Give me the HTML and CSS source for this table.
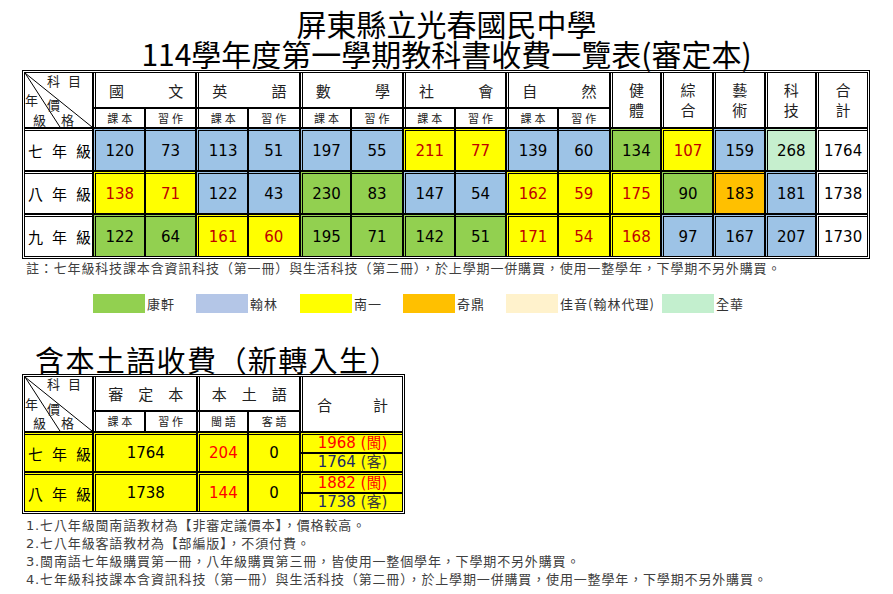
FILE: index.html
```html
<!DOCTYPE html>
<html lang="zh-Hant">
<head>
<meta charset="utf-8">
<title>屏東縣立光春國民中學 教科書收費一覽表</title>
<link rel="stylesheet" href="styles.css">
</head>
<body>
<div class="page">
  <h1 class="title"><span>屏東縣立光春國民中學</span><span>114學年度第一學期教科書收費一覽表(審定本)</span></h1>

  <table class="tbl main">
    <colgroup><col class="c-head"><col span="15"></colgroup>
    <thead>
      <tr class="h1">
        <td rowspan="2" class="diag">
          <div class="diag-box">
            <svg class="diag-lines" viewBox="0 0 69 56" preserveAspectRatio="none"><line x1="0" y1="0" x2="69" y2="56"/><line x1="0" y1="0" x2="36" y2="56"/></svg>
            <span class="dk d-ke">科</span><span class="dk d-mu">目</span><span class="dk d-nian">年</span><span class="dk d-jia">價</span><span class="dk d-ji">級</span><span class="dk d-ge">格</span>
          </div>
        </td>
        <td colspan="2" class="gs"><div class="spread"><span>國</span><span>文</span></div></td>
        <td colspan="2" class="gs"><div class="spread"><span>英</span><span>語</span></div></td>
        <td colspan="2" class="gs"><div class="spread"><span>數</span><span>學</span></div></td>
        <td colspan="2" class="gs"><div class="spread"><span>社</span><span>會</span></div></td>
        <td colspan="2" class="gs"><div class="spread"><span>自</span><span>然</span></div></td>
        <td rowspan="2" class="gs stack">健<br>體</td>
        <td rowspan="2" class="gs stack">綜<br>合</td>
        <td rowspan="2" class="gs stack">藝<br>術</td>
        <td rowspan="2" class="gs stack">科<br>技</td>
        <td rowspan="2" class="gs stack">合<br>計</td>
      </tr>
      <tr class="h2">
        <td class="gs sub">課本</td><td class="sub">習作</td>
        <td class="gs sub">課本</td><td class="sub">習作</td>
        <td class="gs sub">課本</td><td class="sub">習作</td>
        <td class="gs sub">課本</td><td class="sub">習作</td>
        <td class="gs sub">課本</td><td class="sub">習作</td>
      </tr>
    </thead>
    <tbody>
      <tr class="d">
        <th class="lbl"><span>七年級</span></th>
        <td class="gs b">120</td><td class="b">73</td>
        <td class="gs b">113</td><td class="b">51</td>
        <td class="gs b">197</td><td class="b">55</td>
        <td class="gs y">211</td><td class="y">77</td>
        <td class="gs b">139</td><td class="b">60</td>
        <td class="gs g">134</td>
        <td class="gs y">107</td>
        <td class="gs b">159</td>
        <td class="gs lg">268</td>
        <td class="gs w">1764</td>
      </tr>
      <tr class="d">
        <th class="lbl"><span>八年級</span></th>
        <td class="gs y">138</td><td class="y">71</td>
        <td class="gs b">122</td><td class="b">43</td>
        <td class="gs g">230</td><td class="g">83</td>
        <td class="gs b">147</td><td class="b">54</td>
        <td class="gs y">162</td><td class="y">59</td>
        <td class="gs y">175</td>
        <td class="gs g">90</td>
        <td class="gs o">183</td>
        <td class="gs b">181</td>
        <td class="gs w">1738</td>
      </tr>
      <tr class="d">
        <th class="lbl"><span>九年級</span></th>
        <td class="gs g">122</td><td class="g">64</td>
        <td class="gs y">161</td><td class="y">60</td>
        <td class="gs g">195</td><td class="g">71</td>
        <td class="gs g">142</td><td class="g">51</td>
        <td class="gs y">171</td><td class="y">54</td>
        <td class="gs y">168</td>
        <td class="gs b">97</td>
        <td class="gs b">167</td>
        <td class="gs b">207</td>
        <td class="gs w">1730</td>
      </tr>
    </tbody>
  </table>

  <p class="note">註：七年級科技課本含資訊科技（第一冊）與生活科技（第二冊），於上學期一併購買，使用一整學年，下學期不另外購買。</p>

  <div class="legend">
    <div class="lg-item"><span class="sw sw-g"></span><span class="lg-text">康軒</span></div>
    <div class="lg-item"><span class="sw sw-b"></span><span class="lg-text">翰林</span></div>
    <div class="lg-item"><span class="sw sw-y"></span><span class="lg-text">南一</span></div>
    <div class="lg-item"><span class="sw sw-o"></span><span class="lg-text">奇鼎</span></div>
    <div class="lg-item"><span class="sw sw-c"></span><span class="lg-text">佳音(翰林代理)</span></div>
    <div class="lg-item"><span class="sw sw-lg"></span><span class="lg-text">全華</span></div>
  </div>

  <h2 class="sub-title">含本土語收費（新轉入生）</h2>

  <table class="tbl second">
    <colgroup><col class="c-head"><col span="4"><col class="c-total"></colgroup>
    <thead>
      <tr class="h1">
        <td rowspan="2" class="diag">
          <div class="diag-box">
            <svg class="diag-lines" viewBox="0 0 69 56" preserveAspectRatio="none"><line x1="0" y1="0" x2="69" y2="56"/><line x1="0" y1="0" x2="36" y2="56"/></svg>
            <span class="dk d-ke">科</span><span class="dk d-mu">目</span><span class="dk d-nian">年</span><span class="dk d-jia">價</span><span class="dk d-ji">級</span><span class="dk d-ge">格</span>
          </div>
        </td>
        <td colspan="2" class="gs spaced"><span>審定本</span></td>
        <td colspan="2" class="gs spaced"><span>本土語</span></td>
        <td rowspan="2" class="gs"><div class="spread wide"><span>合</span><span>計</span></div></td>
      </tr>
      <tr class="h2">
        <td class="gs sub">課本</td><td class="sub">習作</td>
        <td class="gs sub">閩語</td><td class="sub">客語</td>
      </tr>
    </thead>
    <tbody>
      <tr class="s top">
        <th rowspan="2" class="lbl y2"><span>七年級</span></th>
        <td rowspan="2" colspan="2" class="gs y2">1764</td>
        <td rowspan="2" class="gs y2 red">204</td>
        <td rowspan="2" class="y2">0</td>
        <td class="gs y2 red">1968 (閩)</td>
      </tr>
      <tr class="s">
        <td class="gs y2 navy">1764 <span class="paren">(客)</span></td>
      </tr>
      <tr class="s top">
        <th rowspan="2" class="lbl y2"><span>八年級</span></th>
        <td rowspan="2" colspan="2" class="gs y2">1738</td>
        <td rowspan="2" class="gs y2 red">144</td>
        <td rowspan="2" class="y2">0</td>
        <td class="gs y2 red">1882 (閩)</td>
      </tr>
      <tr class="s">
        <td class="gs y2 navy">1738 <span class="paren">(客)</span></td>
      </tr>
    </tbody>
  </table>

  <ol class="notes">
    <li>1.七八年級閩南語教材為【非審定議價本】，價格較高。</li>
    <li>2.七八年級客語教材為【部編版】，不須付費。</li>
    <li>3.閩南語七年級購買第一冊，八年級購買第三冊，皆使用一整個學年，下學期不另外購買。</li>
    <li>4.七年級科技課本含資訊科技（第一冊）與生活科技（第二冊），於上學期一併購買，使用一整學年，下學期不另外購買。</li>
  </ol>
</div>
</body>
</html>
```

FILE: styles.css
```css
* { box-sizing: border-box; }
html, body { margin: 0; padding: 0; background: #fff; }
body {
  font-family: "Noto Sans CJK TC", "Noto Sans", sans-serif;
  color: #000;
}
.page { width: 893px; padding-top: 8px; }

.title {
  margin: 0;
  font-weight: normal;
  font-size: 30px;
  line-height: 30px;
  text-align: center;
}
.title span { display: block; }

/* tables */
.tbl {
  border-collapse: separate;
  border-spacing: 0;
  border: 1px solid #000;
  padding: 1px;
  table-layout: fixed;
  margin-left: 22px;
}
.main { width: 848px; margin-top: 2px; }
.second { width: 383px; }
.c-head { width: 69px; }
.c-total { width: 103px; }

.tbl td, .tbl th {
  border: 1px solid #000;
  padding: 0;
  text-align: center;
  vertical-align: middle;
  font-weight: normal;
}
.tbl .gs { border-left: 3px double #000; }

.main .h1 { height: 36px; }
.main .h2 { height: 20px; }
.main .d { height: 43px; }
.second .h1 { height: 34px; }
.second .h2 { height: 21px; }
.second .s { height: 19px; }

.tbl tbody .d td, .tbl tbody .d th,
.tbl tbody .top td, .tbl tbody .top th { border-top: 3px double #000; }

.h1 td { font-size: 15px; color: #222; }
.spread {
  display: flex;
  justify-content: space-between;
  padding: 0 12px 0 13px;
}
.spread.wide { padding: 0 14px 0 14px; }
.stack { line-height: 20px; }
.spaced span { letter-spacing: 15px; margin-right: -15px; }
.sub {
  font-size: 11px;
  letter-spacing: 3px;
  padding-left: 3px !important;
  color: #222;
}

/* diagonal header */
.diag { padding: 0; }
.diag-box {
  position: relative;
  width: 100%;
  height: 54px;
}
.diag-lines {
  position: absolute;
  left: 0; top: 0;
  width: 100%;
  height: 100%;
}
.diag-lines line { stroke: #000; stroke-width: 1; vector-effect: non-scaling-stroke; }
.dk {
  position: absolute;
  font-size: 13px;
  line-height: 13px;
  color: #222;
}
.d-ke { left: 22px; top: 1px; }
.d-mu { left: 43px; top: 1px; }
.d-nian { left: 0; top: 20px; }
.d-jia { left: 22px; top: 25px; }
.d-ji { left: 8px; top: 40px; }
.d-ge { left: 36px; top: 40px; }
.second .d-ke, .second .d-mu { top: 0; }
.second .d-nian { top: 20px; }
.second .d-jia { top: 25px; }
.second .d-ji, .second .d-ge { top: 39px; }

/* data */
.tbl tbody td {
  font-family: "DejaVu Sans", "Noto Sans CJK TC", sans-serif;
  font-size: 15px;
}
.lbl {
  font-size: 15px;
  text-align: left !important;
  padding-left: 3px !important;
  white-space: nowrap;
}
.lbl span { letter-spacing: 9px; margin-right: -9px; }
.b { background: #9DC3E6; }
.y { background: #FFFF00; color: #C00000; }
.g { background: #92D050; }
.o { background: #FFC000; }
.lg { background: #C6EFCE; }
.w { background: #fff; }
.y2 { background: #FFFF00; }
.red { color: #FF0000; }
.navy { color: #1A2A66; }
.paren { color: #3A3A3A; }
.second .s td { line-height: 17px; }

/* note & legend */
.note {
  margin: 2px 0 0 26px;
  font-size: 13px;
  line-height: 16px;
  letter-spacing: 0.85px;
  color: #404040;
  font-family: "DejaVu Sans", "Noto Sans CJK TC", sans-serif;
}
.legend {
  display: grid;
  grid-template-columns: 103px 104px 103px 103px 156px auto;
  margin: 17px 0 0 93px;
}
.lg-item { display: flex; align-items: center; }
.sw { display: block; width: 52px; height: 19px; flex: none; }
.sw-g { background: #92D050; }
.sw-b { background: #B4C6E7; }
.sw-y { background: #FFFF00; }
.sw-o { background: #FFC000; }
.sw-c { background: #FFF2CC; }
.sw-lg { background: #C3EFCE; }
.lg-text {
  margin-left: 2px;
  font-size: 13px;
  letter-spacing: 1px;
  color: #333;
  line-height: 19px;
}

.sub-title {
  margin: 31px 0 0 35px;
  font-weight: normal;
  font-size: 29px;
  line-height: 30px;
  letter-spacing: 1.4px;
}

.notes {
  list-style: none;
  margin: 3px 0 0 26px;
  padding: 0;
  font-family: "DejaVu Sans", "Noto Sans CJK TC", sans-serif;
  font-size: 13px;
  line-height: 18px;
  letter-spacing: 0.85px;
  color: #404040;
}
```
